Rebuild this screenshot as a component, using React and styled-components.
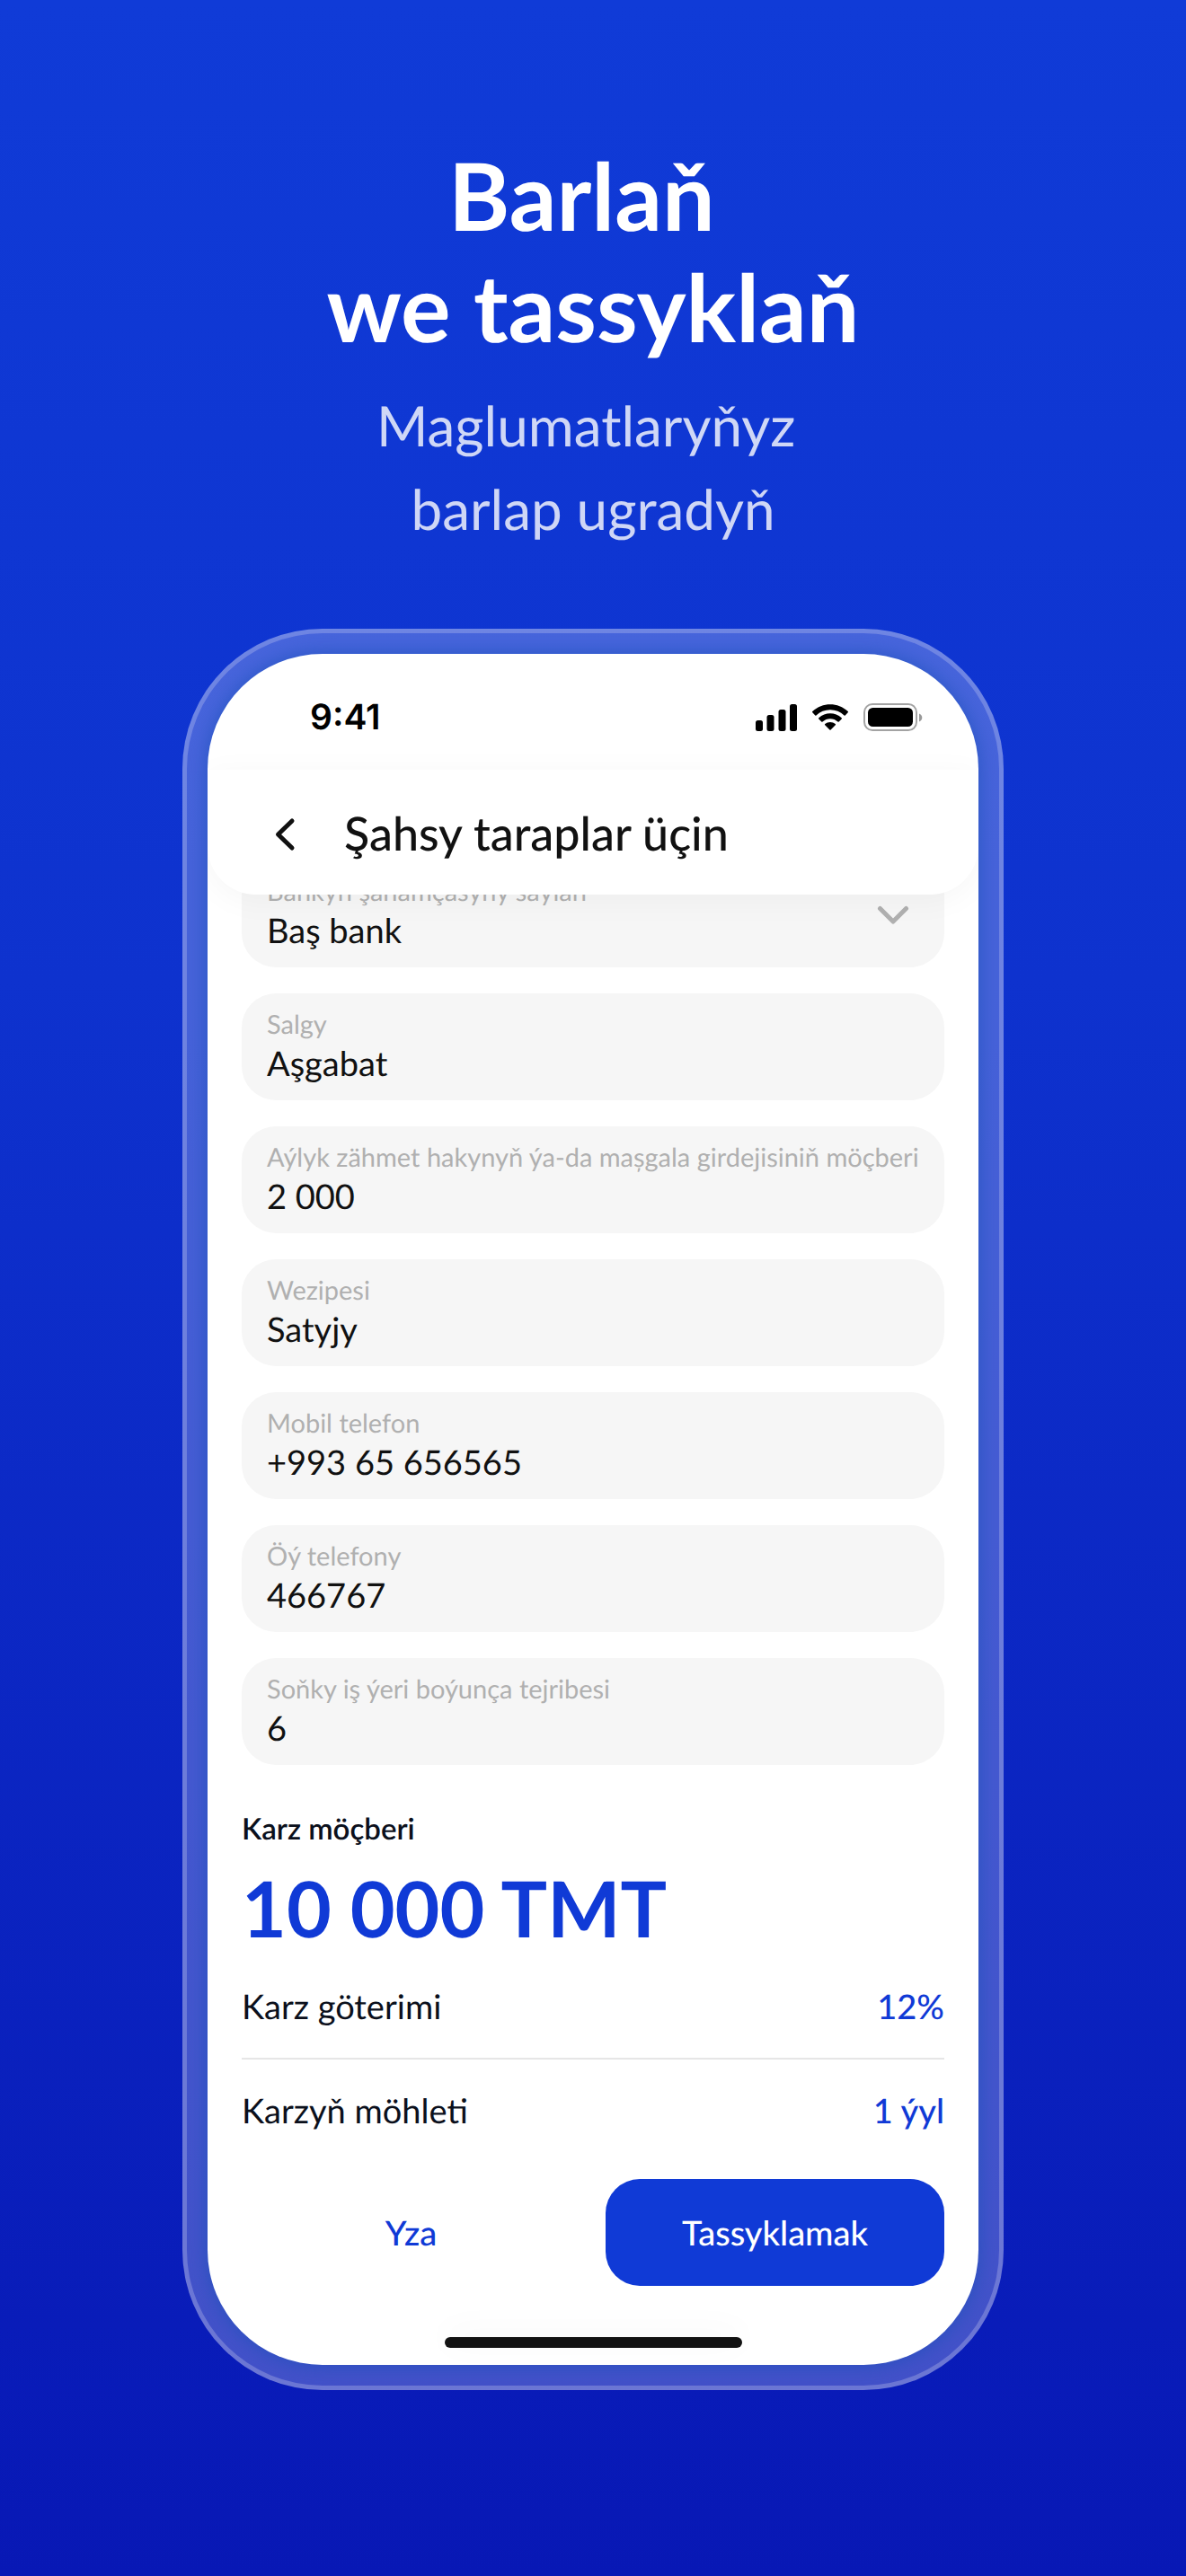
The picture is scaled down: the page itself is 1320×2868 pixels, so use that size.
import React, { useState } from "react";
import styled, { createGlobalStyle } from "styled-components";

const GlobalStyle = createGlobalStyle`
  * {
    box-sizing: border-box;
  }

  body {
    margin: 0;
    font-family: "Lato", sans-serif;
    color: #111;
    text-rendering: geometricPrecision;
  }
`;

const Page = styled.main`
  min-height: 100vh;
  padding: 156px 24px 207px;
  background: linear-gradient(180deg, #103bd7 0%, #0e32ce 38%, #0818b5 100%);
`;

const Title = styled.h1`
  margin: 0;
  font-size: 104px;
  line-height: 124px;
  font-weight: 700;
  text-align: center;
  color: #fff;
`;

const Subtitle = styled.p`
  margin: 24px 0 86px;
  font-size: 62px;
  line-height: 93px;
  text-align: center;
  color: rgba(255, 255, 255, 0.8);
`;

const Phone = styled.section`
  max-width: 914px;
  margin: 0 auto;
  padding: 23px;
  border: 5px solid rgba(255, 255, 255, 0.22);
  border-radius: 156px;
  background: rgba(255, 255, 255, 0.24);
`;

const Screen = styled.div`
  overflow: hidden;
  padding-bottom: 19px;
  border-radius: 128px;
  background: #fff;
  box-shadow: 0 0 22px rgba(24, 80, 184, 0.7);
`;

const StatusBar = styled.div`
  display: flex;
  align-items: center;
  justify-content: space-between;
  height: 129px;
  padding: 12px 62px 0 114px;
`;

const Time = styled.time`
  font-family: "Inter", sans-serif;
  font-size: 39px;
  line-height: 48px;
  font-weight: 600;
  color: #000;
`;

const StatusIcons = styled.div`
  display: flex;
  align-items: center;
  gap: 16px;
`;

const Header = styled.header`
  position: relative;
  z-index: 1;
  display: flex;
  align-items: center;
  gap: 44px;
  height: 139px;
  padding: 2px 62px 0;
  border-radius: 0 0 54px 54px;
  background: #fff;
  box-shadow: 0 6px 36px rgba(0, 0, 0, 0.04);
`;

const BackButton = styled.button`
  display: flex;
  padding: 0;
  border: none;
  background: none;
  color: #111;
  cursor: pointer;
`;

const HeaderTitle = styled.h2`
  margin: 0;
  font-size: 52px;
  line-height: 60px;
  font-weight: 500;
`;

// the list is scrolled, so its first field sits partly behind the header
const Form = styled.form`
  margin-top: -38px;
  padding: 0 38px;
`;

const Fields = styled.div`
  display: grid;
  gap: 29px;
`;

const Field = styled.label`
  display: grid;
  grid-template-columns: 1fr auto;
  align-items: center;
  padding: 16px 28px;
  border-radius: 38px;
  background: #f6f6f6;
`;

const FieldText = styled.span`
  display: flex;
  flex-direction: column;
  min-width: 0;
`;

const FieldLabel = styled.span`
  font-size: 29px;
  line-height: 37px;
  white-space: nowrap;
  color: #b0b0b0;
`;

const Input = styled.input`
  width: 100%;
  height: 50px;
  padding: 0;
  border: none;
  outline: none;
  appearance: none;
  background: none;
  font-family: inherit;
  font-size: 38px;
  line-height: 50px;
  color: #111;
  text-rendering: inherit;
`;

const Total = styled.div`
  margin-top: 51px;
`;

const TotalLabel = styled.div`
  font-size: 33px;
  line-height: 40px;
  font-weight: 600;
  color: #0b101c;
`;

const TotalAmount = styled.div`
  margin-top: 17px;
  font-size: 86px;
  line-height: 104px;
  font-weight: 700;
  color: #103ad6;
`;

const Terms = styled.dl`
  margin: 0;
`;

const Term = styled.div`
  display: flex;
  justify-content: space-between;
  padding: 34px 0;
  font-size: 38px;
  line-height: 46px;
  color: #0b101c;

  & + & {
    border-top: 2px solid #e6e6e6;
  }

  dd {
    margin: 0;
    font-weight: 500;
    color: #103ad6;
  }
`;

const Actions = styled.div`
  display: grid;
  grid-template-columns: 1fr 1fr;
  gap: 28px;
  margin-top: 19px;
`;

const Button = styled.button`
  height: 119px;
  padding: 0 28px;
  border: none;
  border-radius: 38px;
  background: ${({ $primary }) => ($primary ? "#103ad6" : "transparent")};
  color: ${({ $primary }) => ($primary ? "#fff" : "#103ad6")};
  font-family: inherit;
  font-size: 38px;
  font-weight: 500;
  text-rendering: inherit;
  cursor: pointer;
`;

const HomeIndicator = styled.div`
  width: 331px;
  height: 12px;
  margin: 57px auto 0;
  border-radius: 6px;
  background: #121212;
  box-shadow: 0 -6px 36px rgba(0, 0, 0, 0.05);
`;

const SignalIcon = () => (
  <svg width="46" height="30" viewBox="0 0 46 30" aria-hidden="true">
    <rect x="0" y="18" width="8" height="12" rx="2.5" />
    <rect x="12.5" y="12" width="8" height="18" rx="2.5" />
    <rect x="25.5" y="6" width="8" height="24" rx="2.5" />
    <rect x="38" y="0" width="8" height="30" rx="2.5" />
  </svg>
);

const WifiIcon = () => (
  <svg width="42" height="30" viewBox="0 0 42 30" aria-hidden="true">
    <path d="M21 6.2c5.8 0 11.3 2.2 15.6 6.2.3.3.8.3 1.1 0l3-3.1c.4-.3.4-.9 0-1.2C29.7-2.4 12.3-2.4 1.3 8.1c-.4.3-.4.9 0 1.2l3 3.1c.3.3.8.3 1.1 0C9.7 8.4 15.2 6.2 21 6.2Z" />
    <path d="M21 16.2c3.2 0 6.2 1.2 8.5 3.3.3.3.8.3 1.2 0l3-3.1c.4-.3.4-.9 0-1.2-7.2-6.7-18.2-6.7-25.4 0-.4.3-.4.9 0 1.2l3 3.1c.4.3.9.3 1.2 0 2.3-2.1 5.3-3.3 8.5-3.3Z" />
    <path d="M26.8 23.2c.4-.4.4-.9 0-1.2-3.3-2.8-8.3-2.8-11.6 0-.4.3-.4.8 0 1.2l5.2 5.3c.3.3.9.3 1.2 0l5.2-5.3Z" />
  </svg>
);

const BatteryIcon = () => (
  <svg width="66" height="31" viewBox="0 0 66 31" aria-hidden="true">
    <rect
      x="1"
      y="1"
      width="58"
      height="29"
      rx="9"
      fill="none"
      stroke="#000"
      strokeOpacity="0.36"
      strokeWidth="2"
    />
    <rect x="5" y="5" width="50" height="21" rx="5.5" />
    <path d="M62 11.5v9c1.9-.8 3.3-2.500 3.300-4.500s-1.400-3.700-3.300-4.500Z" fillOpacity="0.4" />
  </svg>
);

const BackIcon = () => (
  <svg width="46" height="46" viewBox="0 0 46 46" fill="none" aria-hidden="true">
    <path
      d="M32 9 16.5 24 32 39"
      stroke="currentColor"
      strokeWidth="5"
      strokeLinecap="round"
      strokeLinejoin="round"
    />
  </svg>
);

const ChevronIcon = () => (
  <svg width="58" height="46" viewBox="0 0 58 46" fill="none" aria-hidden="true">
    <path
      d="M14.5 16.5 29 31 43.5 16.5"
      stroke="#b0b0b0"
      strokeWidth="5"
      strokeLinecap="round"
      strokeLinejoin="round"
    />
  </svg>
);

const initialFields = [
  { name: "address", label: "Salgy", value: "Aşgabat" },
  {
    name: "income",
    label: "Aýlyk zähmet hakynyň ýa-da mașgala girdejisiniň möçberi",
    value: "2 000",
  },
  { name: "position", label: "Wezipesi", value: "Satyjy" },
  { name: "mobile", label: "Mobil telefon", value: "+993 65 656565" },
  { name: "home", label: "Öý telefony", value: "466767" },
  { name: "experience", label: "Soňky iş ýeri boýunça tejribesi", value: "6" },
];

const terms = [
  { label: "Karz göterimi", value: "12%" },
  { label: "Karzyň möhleti", value: "1 ýyl" },
];

const App = () => {
  const [fields, setFields] = useState(initialFields);

  const handleChange = (name, value) => {
    setFields(fields.map((f) => (f.name === name ? { ...f, value } : f)));
  };

  return (
    <>
      <GlobalStyle />
      <Page>
        <Title>
          Barlaň&nbsp;
          <br />
          we tassyklaň
        </Title>
        <Subtitle>
          Maglumatlaryňyz&nbsp;
          <br />
          barlap ugradyň
        </Subtitle>
        <Phone>
          <Screen>
            <StatusBar>
              <Time>9:41</Time>
              <StatusIcons>
                <SignalIcon />
                <WifiIcon />
                <BatteryIcon />
              </StatusIcons>
            </StatusBar>
            <Header>
              <BackButton type="button" aria-label="Yza">
                <BackIcon />
              </BackButton>
              <HeaderTitle>Şahsy taraplar üçin</HeaderTitle>
            </Header>
            <Form onSubmit={(event) => event.preventDefault()}>
              <Fields>
                <Field>
                  <FieldText>
                    <FieldLabel>Bankyň şahamçasyny saýlaň</FieldLabel>
                    <Input as="select" name="branch" defaultValue="bas">
                      <option value="bas">Baş bank</option>
                    </Input>
                  </FieldText>
                  <ChevronIcon />
                </Field>
                {fields.map(({ name, label, value }) => (
                  <Field key={name}>
                    <FieldText>
                      <FieldLabel>{label}</FieldLabel>
                      <Input
                        name={name}
                        value={value}
                        onChange={(event) => handleChange(name, event.target.value)}
                      />
                    </FieldText>
                  </Field>
                ))}
              </Fields>
              <Total>
                <TotalLabel>Karz möçberi</TotalLabel>
                <TotalAmount>10 000 TMT</TotalAmount>
              </Total>
              <Terms>
                {terms.map(({ label, value }) => (
                  <Term key={label}>
                    <dt>{label}</dt>
                    <dd>{value}</dd>
                  </Term>
                ))}
              </Terms>
              <Actions>
                <Button type="button">Yza</Button>
                <Button type="submit" $primary>
                  Tassyklamak
                </Button>
              </Actions>
            </Form>
            <HomeIndicator />
          </Screen>
        </Phone>
      </Page>
    </>
  );
};

export default App;
